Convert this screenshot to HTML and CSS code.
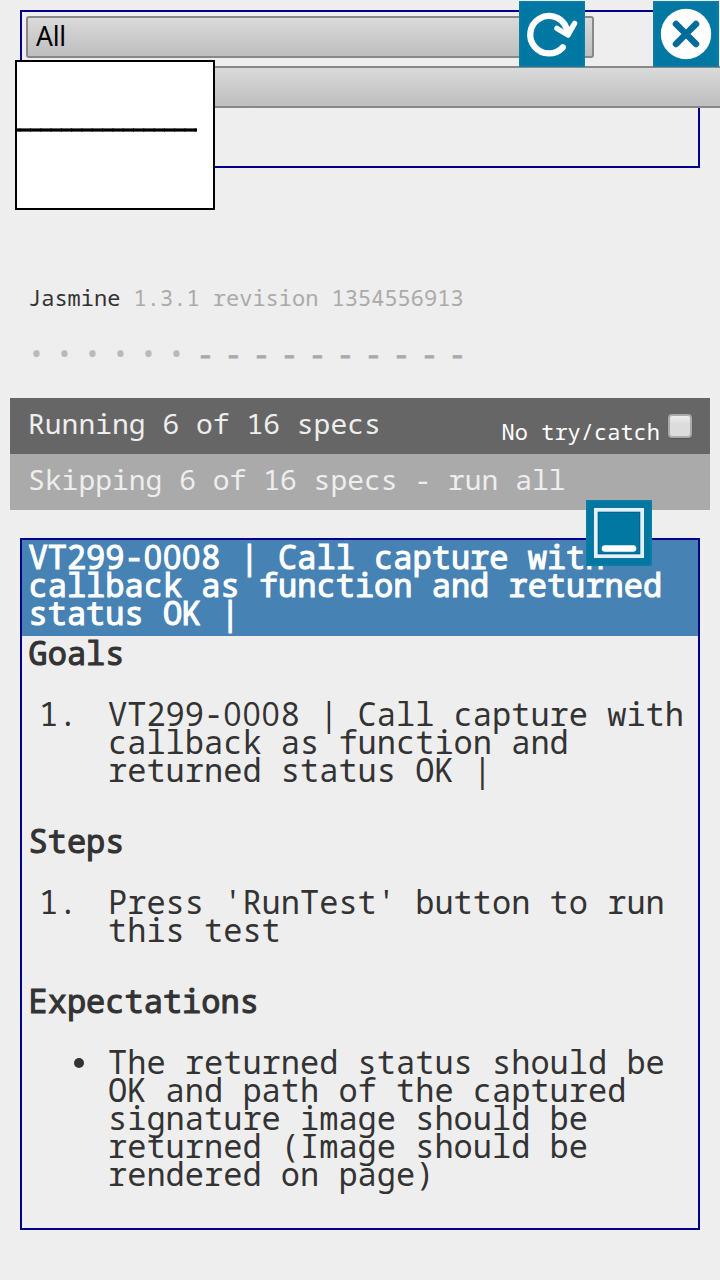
FILE: index.html
```
<!DOCTYPE html>
<html lang="en">
<head>
<meta charset="utf-8">
<title>Jasmine Spec Runner</title>
<link rel="stylesheet" href="styles.css">
</head>
<body>
<section class="toolbar">
  <div class="select">All</div>
  <div class="select select-wide"></div>
  <div class="signature">
    <svg width="196" height="146" viewBox="0 0 196 146"><path d="M0 68H180" stroke="#666" stroke-width="4"/><path d="M0 68H180" stroke="#222" stroke-width="4" stroke-dasharray="1 9.3" stroke-dashoffset="-13"/><path d="M0 68H180" stroke="#000" stroke-width="2"/></svg>
  </div>
</section>

<button class="tile tile-reload" aria-label="Reload">
  <svg width="66" height="66" viewBox="0 0 66 66" fill="none" stroke="#fff" stroke-linecap="round" stroke-linejoin="round"><path d="M43.800 46.300A18.700 18.700 0 1 1 47 26" stroke-width="6.300"/><path d="M38 27.500L49 34L55.500 22.500" stroke-width="5.500"/><path d="M45.500 26L49 33L52 26" fill="#fff" stroke-width="3"/></svg>
</button>
<button class="tile tile-close" aria-label="Close">
  <svg width="66" height="66" viewBox="0 0 66 66"><circle cx="33" cy="33" r="25.200" fill="#fff"/><path d="M23 23L43 43M43 23L23 43" stroke="#006c99" stroke-width="6.500" stroke-linecap="round"/></svg>
</button>
<button class="tile tile-minimize" aria-label="Minimize">
  <svg width="66" height="66" viewBox="0 0 66 66" fill="none"><rect x="10" y="10" width="46" height="46" stroke="#006493" stroke-width="6"/><rect x="9.800" y="9.800" width="46.400" height="46.400" stroke="#e2f1f6" stroke-width="3.800"/><path d="M19 48.500H47" stroke="#fff" stroke-width="6.500" stroke-linecap="round"/></svg>
</button>

<main class="reporter">
  <div class="banner">Jasmine <span class="version">1.3.1 revision 1354556913</span></div>
  <ul class="symbols">
    <li class="passed">•</li><li class="passed">•</li><li class="passed">•</li><li class="passed">•</li><li class="passed">•</li><li class="passed">•</li>
    <li>-</li><li>-</li><li>-</li><li>-</li><li>-</li><li>-</li><li>-</li><li>-</li><li>-</li><li>-</li>
  </ul>
  <div class="bar running"><span>Running 6 of 16 specs</span><label class="trycatch">No try/catch<span class="checkbox"></span></label></div>
  <div class="bar skipping">Skipping 6 of 16 specs - run all</div>
</main>

<article class="spec">
  <h2>VT299-<span class="zero">000</span>8 | Call capture with callback as function and returned status OK |</h2>
  <h3>Goals</h3>
  <ol><li>VT299-<span class="zero">000</span>8 | Call capture with callback as function and returned status OK |</li></ol>
  <h3>Steps</h3>
  <ol><li>Press 'RunTest' button to run this test</li></ol>
  <h3>Expectations</h3>
  <ul class="bullets"><li>The returned status should be OK and path of the captured signature image should be returned (Image should be rendered on page)</li></ul>
</article>
</body>
</html>
```
FILE: styles.css
```
* { box-sizing: border-box; }
html { overflow: hidden; }
body {
  margin: 0;
  padding-top: 10px;
  height: 1280px;
  position: relative;
  overflow: hidden;
  background: #eee;
  color: #333;
  font-family: "Noto Sans Mono", "DejaVu Sans Mono", monospace;
}
h2, h3, ul, ol { margin: 0; padding: 0; font-size: inherit; font-weight: inherit; }
ul, ol { list-style: none; }

.toolbar {
  position: relative;
  height: 158px;
  margin: 0 20px;
  padding: 4px;
  border: 2px solid #00008b;
}
.select {
  width: 568px;
  height: 42px;
  padding-left: 8px;
  border: 2px solid #888;
  border-radius: 3px;
  background: linear-gradient(#dadada, #bebebe);
  color: #000;
  font: 26.500px/37px "Noto Sans", sans-serif;
  letter-spacing: -.3px;
}
.select-wide {
  width: 694px;
  margin-top: 8px;
  border-right: 0;
  border-radius: 3px 0 0 3px;
}
.signature {
  position: absolute;
  left: -7px;
  top: 48px;
  width: 200px;
  height: 150px;
  border: 2px solid #000;
  background: #fff;
}
svg { display: block; }

.tile {
  position: absolute;
  width: 66px;
  height: 66px;
  padding: 0;
  border: 0;
  background: #0078a2;
  box-shadow: inset 0 0 3px #2488ab;
}
.tile-reload { left: 519px; top: 1px; }
.tile-close { left: 653px; top: 1px; }
.tile-minimize { left: 586px; top: 500px; }

.reporter { margin: 115px 10px 0; }
.banner { padding-left: 18px; font-size: 22px; line-height: 28px; }
.version { color: #aaa; }
.symbols {
  display: grid;
  grid-template-columns: repeat(16, 28px);
  height: 28px;
  margin: 28px 0 31px;
  padding-left: 18px;
  color: #aaa;
  font-size: 28px;
  line-height: 28px;
}
.symbols li { padding-left: 1px; -webkit-text-stroke: 1px #aaa; }
.symbols .passed { padding-left: 0; color: #b9b9b9; -webkit-text-stroke: 0; }
.bar {
  display: flex;
  justify-content: space-between;
  height: 56px;
  padding: 0 18px;
  color: #eee;
  font-size: 28px;
  line-height: 51px;
}
.running { background: #666; }
.skipping { background: #aaa; }
.trycatch {
  display: flex;
  gap: 8px;
  color: #fff;
  font-size: 22px;
  line-height: 67px;
}
.checkbox {
  width: 24px;
  height: 24px;
  margin-top: 16px;
  border: 2px solid #aaa;
  border-radius: 4px;
  background: linear-gradient(#eee, #dcdcdc 40%);
  box-shadow: 0 1px 1px #555;
}

.spec {
  height: 692px;
  margin: 28px 20px 0;
  border: 2px solid #00008b;
  font-size: 32px;
  line-height: 28px;
}
.spec h2 {
  height: 96px;
  padding: 3px 6px 0 6.500px;
  background: #4682b4;
  color: #fff;
  -webkit-text-stroke: 1.100px #fff;
}
.spec h3 { padding: 3px 6px 0 6.500px; -webkit-text-stroke: 1.100px #333; }
.spec ol, .spec .bullets { margin: 33px 0 40px; padding-left: 86px; }
.spec li { position: relative; }
.spec ol > li::before { content: "1."; position: absolute; left: -69px; }
.bullets > li::before {
  content: "";
  position: absolute;
  left: -34px;
  top: 10px;
  width: 10px;
  height: 10px;
  border-radius: 50%;
  background: #333;
}
.zero { font-family: "Open Sans", "Noto Sans", sans-serif; letter-spacing: .028em; }
```
